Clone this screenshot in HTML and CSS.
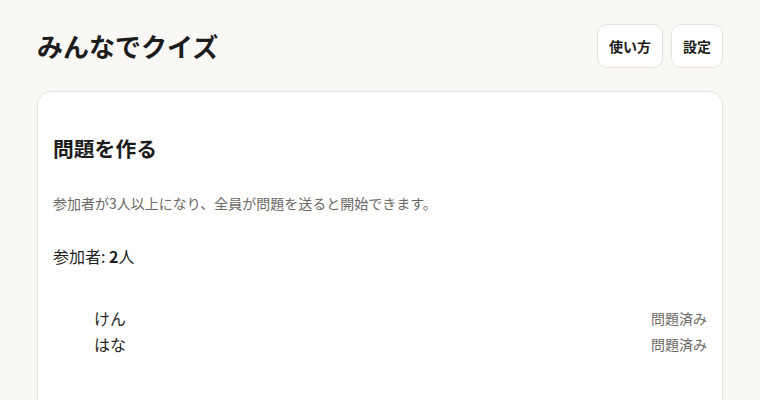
FILE: index.html
```html
<!DOCTYPE html>
<html lang="ja">
<head>
<meta charset="utf-8">
<title>みんなでクイズ</title>
<link rel="stylesheet" href="styles.css">
</head>
<body>
<div class="page">
  <header class="header">
    <h1 class="title">みんなでクイズ</h1>
    <div class="actions">
      <button class="btn">使い方</button>
      <button class="btn">設定</button>
    </div>
  </header>
  <section class="card">
    <h2 class="card-title">問題を作る</h2>
    <p class="desc">参加者が3人以上になり、全員が問題を送ると開始できます。</p>
    <p class="count">参加者: <strong>2</strong>人</p>
    <ul class="players">
      <li class="player"><span class="name">けん</span><span class="status">問題済み</span></li>
      <li class="player"><span class="name">はな</span><span class="status">問題済み</span></li>
    </ul>
  </section>
</div>
</body>
</html>
```
FILE: styles.css
```css
html, body {
  margin: 0;
  background: #f9f8f5;
  color: #1f1f1f;
  font-family: "Noto Sans CJK JP", "Noto Sans", sans-serif;
}
.page {
  height: 100vh;
  box-sizing: border-box;
  overflow: hidden;
  display: flex;
  flex-direction: column;
  padding: 24px 37px 0;
}
.header {
  display: flex;
  justify-content: space-between;
  align-items: center;
  height: 44px;
}
.title {
  margin: 0;
  font-size: 26px;
  font-weight: 700;
  line-height: 1.2;
  color: #1c1c1c;
}
.actions {
  display: flex;
  gap: 8px;
}
.btn {
  font-family: inherit;
  font-size: 14px;
  font-weight: 700;
  line-height: 18px;
  color: #1c1c1c;
  background: #ffffff;
  border: 1px solid #e6e3de;
  border-radius: 10px;
  padding: 12px 11px;
}
.card {
  flex: 1 0 auto;
  margin: 23px 0 -40px;
  background: #ffffff;
  border: 1px solid #e6e3de;
  border-radius: 14px;
  padding: 16px 15px;
  box-shadow: 0 1px 4px rgba(0,0,0,0.03);
}
.card-title {
  margin: 25px 0 0;
  font-size: 20.8px;
  font-weight: 700;
  line-height: 30px;
  color: #1c1c1c;
}
.desc {
  margin: 30px 0 0;
  font-size: 14px;
  line-height: 20px;
  color: #6b6966;
}
.count {
  margin: 31px 0 0;
  font-size: 16px;
  line-height: 24px;
}
.count strong {
  font-weight: 700;
}
.players {
  list-style: none;
  margin: 37px 0 0;
  padding: 0 0 0 41px;
}
.player {
  display: flex;
  justify-content: space-between;
  align-items: center;
  height: 26px;
}
.name {
  font-size: 16px;
}
.status {
  font-size: 14px;
  color: #6b6966;
}
```
